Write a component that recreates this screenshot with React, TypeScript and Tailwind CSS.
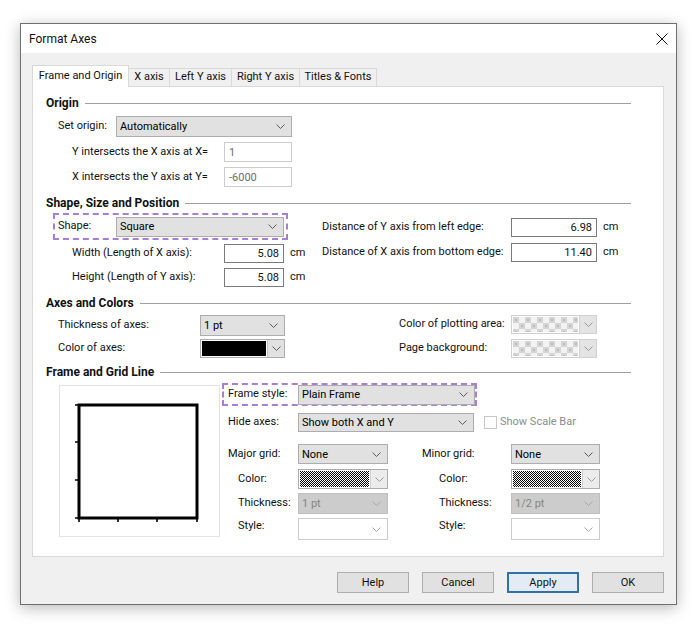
import React from "react";

const Chevron = ({ color = "#5a5a5a" }: { color?: string }) => (
  <svg width="9" height="5" viewBox="0 0 9 5" className="shrink-0">
    <path d="M0.5 0.5 L4.5 4.5 L8.5 0.5" fill="none" stroke={color} strokeWidth="1" />
  </svg>
);

type SelProps = { cls: string; text?: string; variant?: "normal" | "disabled" | "white" };

function Select({ cls, text = "", variant = "normal" }: SelProps) {
  const look =
    variant === "disabled"
      ? "bg-[#cccccc] border-[#bfbfbf] text-[#858585]"
      : variant === "white"
      ? "bg-white border-[#cccccc] text-[#858585]"
      : "bg-[#e1e1e1] border-[#adadad] text-black";
  const chev = variant === "normal" ? "#5a5a5a" : "#a8a8a8";
  return (
    <div className={`flex items-center justify-between border pl-[3px] pr-[6px] shrink-0 ${look} ${cls}`}>
      <span className="leading-none">{text}</span>
      <Chevron color={chev} />
    </div>
  );
}

function Input({ cls, text }: { cls: string; text: string }) {
  return (
    <div className={`flex items-center justify-end border border-[#7a7a7a] bg-white pr-[4px] shrink-0 ${cls}`}>
      <span className="leading-none">{text}</span>
    </div>
  );
}

function DisInput({ cls, text }: { cls: string; text: string }) {
  return (
    <div className={`flex items-center border border-[#cccccc] bg-white pl-[4px] text-[#6d6d6d] shrink-0 ${cls}`}>
      <span className="leading-none">{text}</span>
    </div>
  );
}

function Header({ t, cls }: { t: string; cls: string }) {
  return (
    <div className={`flex items-center h-[16px] mr-[32px] ${cls}`}>
      <span className="font-bold text-[12px] leading-none">{t}</span>
      <div className="flex-1 h-px bg-[#a0a0a0] ml-[6px]" />
    </div>
  );
}

function Checker({ id, cls }: { id: string; cls: string }) {
  return (
    <div className={`flex border border-[#d0d0d0] bg-white shrink-0 ${cls}`}>
      <div className="flex-1 p-px">
        <svg width="100%" height="100%">
          <defs>
            <pattern id={id} width="12" height="12" patternUnits="userSpaceOnUse">
              <rect width="12" height="12" fill="#f3f3f3" />
              <rect x="0" y="0" width="6" height="6" fill="#d4d4d4" />
              <rect x="6" y="6" width="6" height="6" fill="#d4d4d4" />
              <rect x="2" y="2" width="2" height="2" fill="#bdbdbd" />
              <rect x="8" y="8" width="2" height="2" fill="#bdbdbd" />
            </pattern>
          </defs>
          <rect width="100%" height="100%" fill={`url(#${id})`} />
        </svg>
      </div>
      <div className="w-[17px] border-l border-[#d0d0d0] bg-[#e4e4e4] flex items-center justify-center">
        <Chevron color="#9a9a9a" />
      </div>
    </div>
  );
}

function Hatch({ id, cls }: { id: string; cls: string }) {
  return (
    <div className={`flex border border-[#adadad] bg-white shrink-0 ${cls}`}>
      <div className="flex-1 p-px">
        <svg width="100%" height="100%" shapeRendering="crispEdges">
          <defs>
            <pattern id={id} width="2" height="2" patternUnits="userSpaceOnUse">
              <rect width="2" height="2" fill="#ffffff" />
              <rect x="0" y="0" width="1" height="1" fill="#000" />
              <rect x="1" y="1" width="1" height="1" fill="#000" />
            </pattern>
          </defs>
          <rect width="100%" height="100%" fill={`url(#${id})`} />
        </svg>
      </div>
      <div className="w-[17px] border-l border-[#d0d0d0] bg-[#ececec] flex items-center justify-center">
        <Chevron color="#9a9a9a" />
      </div>
    </div>
  );
}

function Btn({ t, primary = false }: { t: string; primary?: boolean }) {
  return (
    <div
      className={`w-[72px] h-[21px] flex items-center justify-center ${
        primary ? "border-2 border-[#2e72ad] bg-[#e3ecf4]" : "border border-[#adadad] bg-[#e1e1e1]"
      }`}
    >
      <span className="leading-none">{t}</span>
    </div>
  );
}

export default function App() {
  return (
    <div className="w-[699px] h-[627px] bg-white pt-[23px] pl-[20px] overflow-hidden whitespace-nowrap font-[Roboto,'Liberation_Sans',sans-serif] text-[11px] text-[#111]">
      <div className="w-[657px] h-[582px] border border-[#6f6f6f] bg-[#f0f0f0] shadow-[0_3px_14px_rgba(0,0,0,0.28)] flex flex-col">
        {/* Title bar */}
        <div className="h-[29px] bg-white flex items-center justify-between pl-[8px] pr-[8px] shrink-0">
          <span className="text-[12px] leading-none">Format Axes</span>
          <svg width="12" height="12" viewBox="0 0 12 12">
            <path d="M0.5 0.5 L11.5 11.5 M11.5 0.5 L0.5 11.5" stroke="#111" strokeWidth="1" fill="none" />
          </svg>
        </div>

        {/* Body */}
        <div className="flex-1 pl-[11px] pt-[12px]">
          {/* Tabs */}
          <div className="flex items-end h-[21px] relative z-10">
            <div className="w-[97px] h-[22px] -mb-px bg-white border border-b-0 border-[#d9d9d9] flex items-center justify-center">
              Frame and Origin
            </div>
            <div className="w-[41px] h-[18px] border-t border-r border-[#d9d9d9] flex items-center justify-center">X axis</div>
            <div className="w-[62px] h-[18px] border-t border-r border-[#d9d9d9] flex items-center justify-center">Left Y axis</div>
            <div className="w-[68px] h-[18px] border-t border-r border-[#d9d9d9] flex items-center justify-center">Right Y axis</div>
            <div className="w-[77px] h-[18px] border-t border-r border-[#d9d9d9] flex items-center justify-center">Titles &amp; Fonts</div>
          </div>

          {/* Panel */}
          <div className="w-[632px] h-[471px] bg-white border border-[#d9d9d9] pl-[13px]">
            {/* Origin */}
            <Header t="Origin" cls="mt-[8px]" />
            <div className="flex items-center mt-[5px] h-[21px]">
              <span className="ml-[12px] w-[58px]">Set origin:</span>
              <Select cls="w-[176px] h-[21px]" text="Automatically" />
            </div>
            <div className="flex items-center mt-[5px] h-[20px]">
              <span className="ml-[26px] w-[152px]">Y intersects the X axis at X=</span>
              <DisInput cls="w-[68px] h-[20px]" text="1" />
            </div>
            <div className="flex items-center mt-[5px] h-[20px]">
              <span className="ml-[26px] w-[152px]">X intersects the Y axis at Y=</span>
              <DisInput cls="w-[68px] h-[20px]" text="-6000" />
            </div>

            {/* Shape, Size and Position */}
            <Header t="Shape, Size and Position" cls="mt-[8px]" />
            <div className="flex mt-[2px]">
              <div className="w-[276px] shrink-0">
                <div className="ml-[7px] w-[235px] h-[27px] border-2 border-dashed border-[#a77fd6] flex items-center pl-[3px]">
                  <span className="w-[58px]">Shape:</span>
                  <Select cls="w-[168px] h-[20px]" text="Square" />
                </div>
                <div className="flex items-center mt-[4px] h-[19px]">
                  <span className="ml-[26px] w-[152px]">Width (Length of X axis):</span>
                  <Input cls="w-[60px] h-[19px]" text="5.08" />
                  <span className="ml-[6px]">cm</span>
                </div>
                <div className="flex items-center mt-[5px] h-[19px]">
                  <span className="ml-[26px] w-[152px]">Height (Length of Y axis):</span>
                  <Input cls="w-[60px] h-[19px]" text="5.08" />
                  <span className="ml-[6px]">cm</span>
                </div>
              </div>
              <div className="flex flex-col pt-[5px]">
                <div className="flex items-center h-[19px]">
                  <span className="w-[189px]">Distance of Y axis from left edge:</span>
                  <Input cls="w-[86px] h-[19px]" text="6.98" />
                  <span className="ml-[6px]">cm</span>
                </div>
                <div className="flex items-center mt-[6px] h-[19px]">
                  <span className="w-[189px]">Distance of X axis from bottom edge:</span>
                  <Input cls="w-[86px] h-[19px]" text="11.40" />
                  <span className="ml-[6px]">cm</span>
                </div>
              </div>
            </div>

            {/* Axes and Colors */}
            <Header t="Axes and Colors" cls="mt-[8px]" />
            <div className="flex items-start mt-[4px] h-[21px]">
              <div className="w-[353px] h-[21px] flex items-center shrink-0">
                <span className="ml-[12px] w-[142px]">Thickness of axes:</span>
                <Select cls="w-[85px] h-[21px]" text="1 pt" />
              </div>
              <div className="flex items-center h-[19px]">
                <span className="w-[112px]">Color of plotting area:</span>
                <Checker id="chk1" cls="w-[86px] h-[19px]" />
              </div>
            </div>
            <div className="flex items-center mt-[3px] h-[19px]">
              <div className="w-[353px] h-[19px] flex items-center shrink-0">
                <span className="ml-[12px] w-[142px]">Color of axes:</span>
                <div className="w-[85px] h-[19px] flex border border-[#adadad] bg-white">
                  <div className="flex-1 m-px bg-black" />
                  <div className="w-[17px] bg-[#e1e1e1] border-l border-[#c4c4c4] flex items-center justify-center">
                    <Chevron />
                  </div>
                </div>
              </div>
              <span className="w-[112px]">Page background:</span>
              <Checker id="chk2" cls="w-[86px] h-[19px]" />
            </div>

            {/* Frame and Grid Line */}
            <Header t="Frame and Grid Line" cls="mt-[6px]" />
            <div className="flex mt-[3px]">
              <div className="ml-[13px] mt-[2px] w-[161px] h-[152px] border border-[#e3e3e3] shrink-0">
                <svg width="159" height="150" viewBox="0 0 159 150">
                  <rect x="19" y="19" width="118" height="113" fill="#fff" stroke="#000" strokeWidth="3" />
                  <path
                    d="M15 19 H19 M15 56 H19 M15 94 H19 M15 132 H19 M19 132 V136 M58 132 V136 M97 132 V136 M137 132 V136"
                    stroke="#000"
                    strokeWidth="1.6"
                  />
                </svg>
              </div>
              <div className="ml-[2px] flex flex-col">
                <div className="w-[255px] h-[23px] border-2 border-dashed border-[#a77fd6] flex items-center pl-[4px]">
                  <span className="w-[70px]">Frame style:</span>
                  <Select cls="w-[177px] h-[20px]" text="Plain Frame" />
                </div>
                <div className="flex items-center mt-[7px] h-[19px]">
                  <span className="ml-[6px] w-[70px]">Hide axes:</span>
                  <Select cls="w-[176px] h-[19px]" text="Show both X and Y" />
                  <div className="ml-[10px] w-[13px] h-[13px] border border-[#c8c8c8] bg-white" />
                  <span className="ml-[3px] text-[#8c8c8c]">Show Scale Bar</span>
                </div>
                <div className="flex items-center mt-[12px] h-[20px]">
                  <span className="ml-[6px] w-[70px]">Major grid:</span>
                  <Select cls="w-[90px] h-[20px]" text="None" />
                  <span className="w-[123px] pl-[34px]">Minor grid:</span>
                  <Select cls="w-[89px] h-[20px]" text="None" />
                </div>
                <div className="flex items-center mt-[5px] h-[20px]">
                  <span className="ml-[16px] w-[60px]">Color:</span>
                  <Hatch id="h1" cls="w-[90px] h-[20px]" />
                  <span className="w-[123px] pl-[51px]">Color:</span>
                  <Hatch id="h2" cls="w-[89px] h-[20px]" />
                </div>
                <div className="flex items-center mt-[4px] h-[21px]">
                  <span className="ml-[16px] w-[60px]">Thickness:</span>
                  <Select cls="w-[90px] h-[21px]" text="1 pt" variant="disabled" />
                  <span className="w-[123px] pl-[51px]">Thickness:</span>
                  <Select cls="w-[89px] h-[21px]" text="1/2 pt" variant="disabled" />
                </div>
                <div className="flex items-start mt-[4px] h-[22px]">
                  <span className="ml-[16px] w-[60px] leading-[16px]">Style:</span>
                  <Select cls="w-[90px] h-[22px]" variant="white" />
                  <span className="w-[123px] pl-[51px] leading-[16px]">Style:</span>
                  <Select cls="w-[89px] h-[22px]" variant="white" />
                </div>
              </div>
            </div>
          </div>

          {/* Buttons */}
          <div className="w-[632px] mt-[15px] flex justify-end gap-[13px]">
            <Btn t="Help" />
            <Btn t="Cancel" />
            <Btn t="Apply" primary />
            <Btn t="OK" />
          </div>
        </div>
      </div>
    </div>
  );
}
